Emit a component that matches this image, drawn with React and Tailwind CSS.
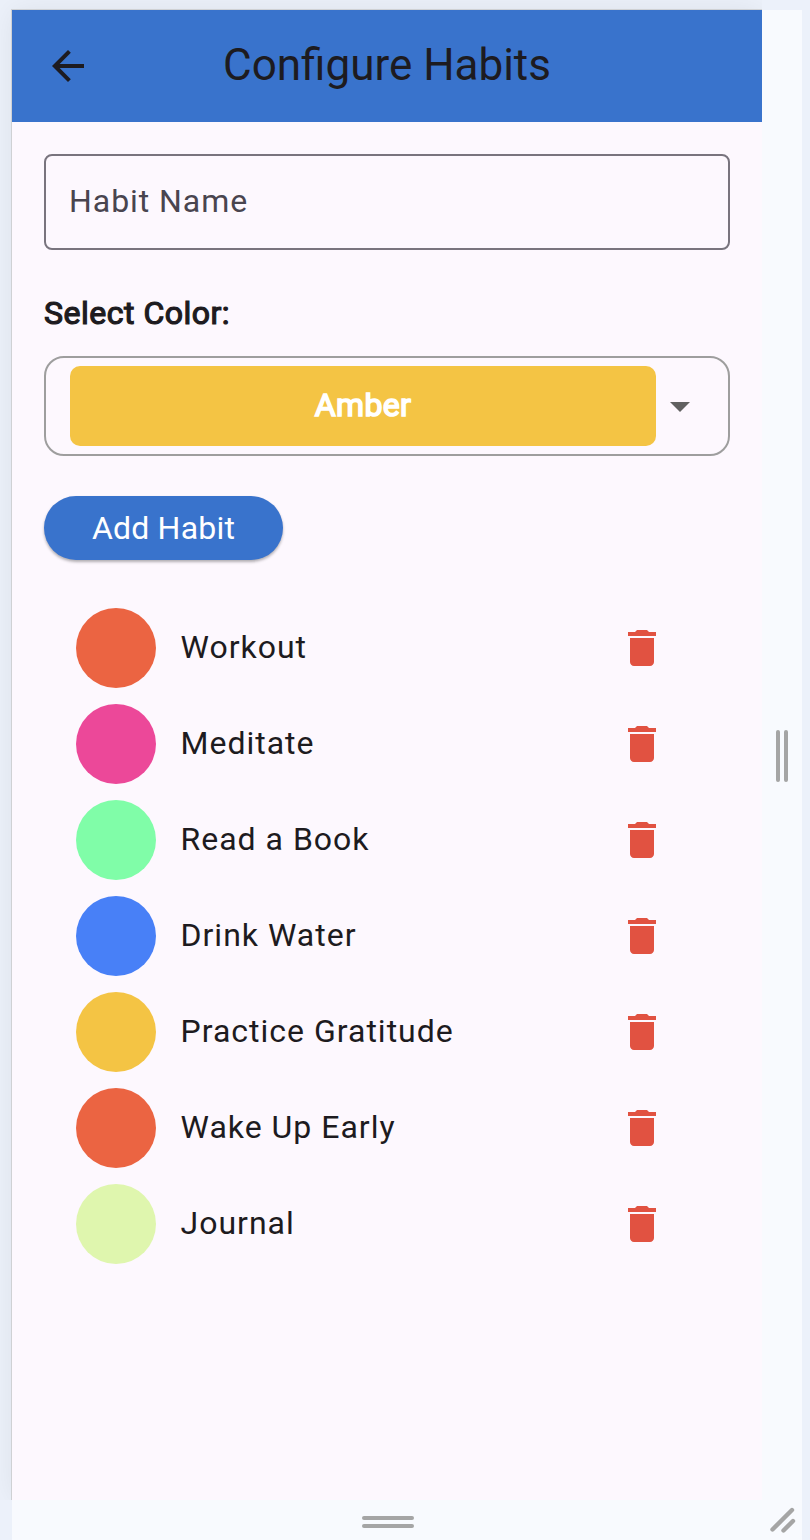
const habits = [
  { name: 'Workout', color: 'bg-[#eb6442]' },
  { name: 'Meditate', color: 'bg-[#ec4899]' },
  { name: 'Read a Book', color: 'bg-[#80fda8]' },
  { name: 'Drink Water', color: 'bg-[#4880f7]' },
  { name: 'Practice Gratitude', color: 'bg-[#f4c444]' },
  { name: 'Wake Up Early', color: 'bg-[#eb6442]' },
  { name: 'Journal', color: 'bg-[#dff6ae]' },
];

function Icon({ d, className }) {
  return (
    <svg viewBox="0 0 24 24" className={`size-12 shrink-0 ${className}`} fill="currentColor">
      <path d={d} />
    </svg>
  );
}

function HabitRow({ name, color }) {
  return (
    <li className="flex h-24 items-center pr-16 pl-8">
      <span className={`size-20 rounded-full ${color}`} />
      <span className="ml-[24.5px] flex-1 pb-0.5 text-[32px] leading-12 tracking-[1px] text-[#1d1b20]">{name}</span>
      <button aria-label="Delete">
        <Icon
          className="text-[#e15241]"
          d="M6 19c0 1.1.9 2 2 2h8c1.1 0 2-.9 2-2V7H6v12zM19 4h-3.5l-1-1h-5l-1 1H5v2h14V4z"
        />
      </button>
    </li>
  );
}

function Screen() {
  return (
    <main className="flex h-[1490px] w-[750px] flex-col bg-[#fdf8fe] shadow-[0_0_0_1px_#cfd1d4,0_0_28px_rgba(0,0,0,0.07)] [clip-path:inset(-30px_0_0_-30px)]">
      <header className="flex h-28 items-center bg-[#3973cc] px-8 text-[#1d1b20]">
        <button aria-label="Back">
          <Icon className="block" d="M20 11H7.83l5.59-5.59L12 4l-8 8 8 8 1.41-1.41L7.83 13H20v-2z" />
        </button>
        <h1 className="flex-1 pr-12 pb-0.5 text-center text-[44px] leading-14">Configure Habits</h1>
      </header>
      <section className="flex flex-col items-start px-8 pt-8">
        <div className="flex h-24 w-full items-center rounded-lg border-2 border-[#79747e] px-[23px] pb-0.5 text-[32px] leading-12 tracking-[0.95px] text-[#49454f]">
          Habit Name
        </div>
        <h2 className="mt-[39px] text-[32px] leading-12 tracking-[0.5px] text-[#1d1b20] [-webkit-text-stroke:1.2px_#1d1b20]">Select Color:</h2>
        <div className="mt-[19px] flex h-[100px] w-full items-center rounded-[20px] border-2 border-[#9e9e9e] px-6">
          <div className="flex h-20 flex-1 items-center justify-center rounded-[10px] bg-[#f4c444] pb-0.5 text-[32px] tracking-[0.4px] text-white [-webkit-text-stroke:1.6px_white]">
            Amber
          </div>
          <Icon className="text-[#616161]" d="M7 10l5 5 5-5z" />
        </div>
        <button className="mt-10 h-16 w-[239px] rounded-full bg-[#3973cc] text-[32px] tracking-[0.2px] text-white shadow-[0_2px_3px_rgba(0,0,0,0.3)]">
          Add Habit
        </button>
      </section>
      <ul className="mt-10 px-8">
        {habits.map((habit) => (
          <HabitRow key={habit.name} {...habit} />
        ))}
      </ul>
    </main>
  );
}

export default function App() {
  return (
    <div className="flex h-[1540px] w-[810px] overflow-hidden bg-[#ecf1fa] pt-[10px] pl-3 font-['Roboto',sans-serif]">
      <div className="grid h-[1530px] w-[790px] grid-cols-[750px_40px] grid-rows-[1490px_40px] bg-[#f8fafe]">
        <Screen />
        <div className="flex items-center justify-center gap-1 pt-0.5">
          <span className="h-[52px] w-1 rounded-full bg-[#a5a5a5]" />
          <span className="h-[52px] w-1 rounded-full bg-[#a5a5a5]" />
        </div>
        <div className="flex flex-col items-center justify-center gap-1 pt-1 pl-0.5">
          <span className="h-1 w-[52px] rounded-full bg-[#a5a5a5]" />
          <span className="h-1 w-[52px] rounded-full bg-[#a5a5a5]" />
        </div>
        <svg viewBox="0 0 40 40" className="size-10" stroke="#a5a5a5" strokeWidth="4.4" strokeLinecap="round">
          <path d="M10.5 29.5 30 10M21.5 30.5 31 21" />
        </svg>
      </div>
    </div>
  );
}
